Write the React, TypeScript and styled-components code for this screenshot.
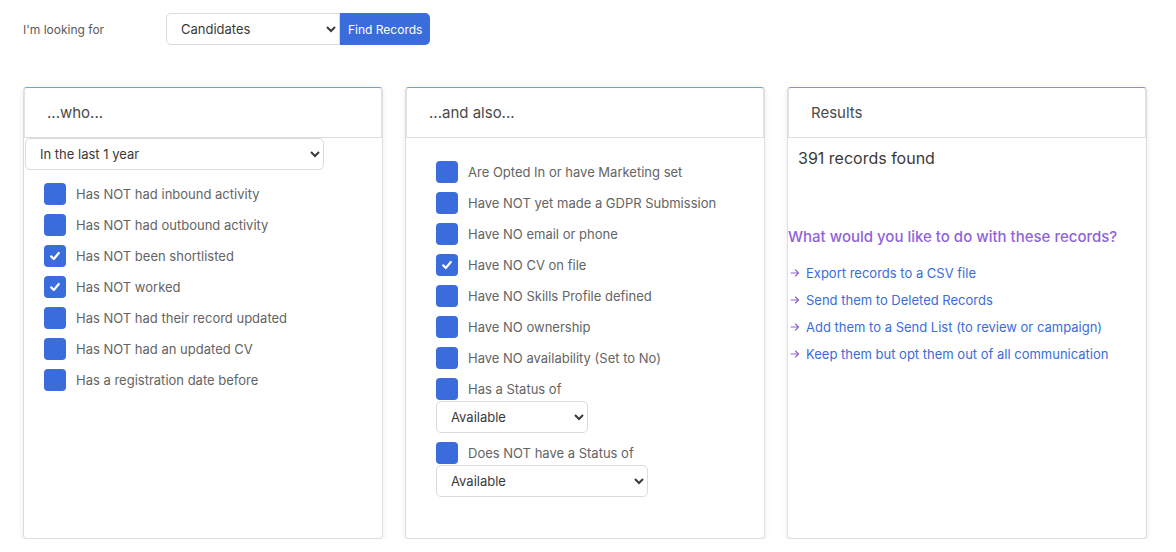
import React from "react";
import styled, { createGlobalStyle } from "styled-components";

const Global = createGlobalStyle`
  html, body { margin: 0; padding: 0; background: #fff; }
  body { font-family: Inter, "Noto Sans", "Liberation Sans", sans-serif; color: #555; }
  * { box-sizing: border-box; }
`;

const Page = styled.div`
  padding: 13px 29px 0 23px;
  width: 1176px;
`;

const Toolbar = styled.div`
  display: flex;
  align-items: center;
  height: 32px;
`;

const ToolbarLabel = styled.span`
  font-size: 12px;
  color: #5a5a5a;
  width: 143px;
`;

const Select = styled.select<{ $w: number }>`
  width: ${(p) => p.$w}px;
  height: 32px;
  font-family: Inter, "Liberation Sans", sans-serif;
  font-size: 13px;
  color: #3a3a3a;
  background: #fff;
  border: 1px solid #dcdcdc;
  border-radius: 5px;
  padding: 0 10px 0 10px;
`;

const ToolbarSelect = styled(Select)`
  border-radius: 5px 0 0 5px;
`;

const FindButton = styled.button`
  height: 32px;
  padding: 0 8px;
  border: none;
  border-radius: 0 5px 5px 0;
  background: #3a6cdc;
  color: #fff;
  font-family: Inter, "Liberation Sans", sans-serif;
  font-size: 12px;
`;

const Columns = styled.div`
  display: grid;
  grid-template-columns: repeat(3, 360px);
  gap: 22px;
  margin-top: 42px;
`;

const Card = styled.div<{ $accent: string }>`
  height: 452px;
  border: 1px solid #dedede;
  border-top: 1px solid ${(p) => p.$accent};
  border-radius: 4px;
  background: #fff;
  box-shadow: 0 2px 6px rgba(0, 0, 0, 0.08);
  display: flex;
  flex-direction: column;
`;

const CardHeader = styled.div`
  height: 50px;
  display: flex;
  align-items: center;
  padding-left: 22px;
  font-size: 15px;
  color: #4a4a4a;
  border-bottom: 1px solid #dcdcdc;
  border-left: 1px solid #e2e2e2;
  border-right: 1px solid #e2e2e2;
`;

const CardBody = styled.div<{ $pad: string }>`
  padding: ${(p) => p.$pad};
  display: flex;
  flex-direction: column;
`;

const CheckList = styled.div<{ $top: number; $left: number }>`
  display: flex;
  flex-direction: column;
  gap: 9px;
  margin-top: ${(p) => p.$top}px;
  padding-left: ${(p) => p.$left}px;
`;

const Row = styled.label`
  display: flex;
  align-items: center;
  gap: 10px;
  font-size: 13px;
  color: #646464;
  height: 22px;
`;

const Box = styled.span`
  width: 22px;
  height: 22px;
  border-radius: 4px;
  background: #3a6cdc;
  display: inline-flex;
  align-items: center;
  justify-content: center;
  flex: none;
`;

const StatusBlock = styled.div`
  display: flex;
  flex-direction: column;
  gap: 1px;
`;

const Check = ({ checked, label }: { checked?: boolean; label: string }) => (
  <Row>
    <Box>
      {checked && (
        <svg width="12" height="12" viewBox="0 0 12 12">
          <path d="M2.2 6.4 L4.8 9 L9.8 3" fill="none" stroke="#fff" strokeWidth="2.2" strokeLinecap="round" strokeLinejoin="round" />
        </svg>
      )}
    </Box>
    {label}
  </Row>
);

const Count = styled.div`
  font-size: 16px;
  color: #3a3a3a;
  padding: 10px 0 0 10px;
`;

const Question = styled.div`
  margin-top: 59px;
  font-size: 15px;
  font-weight: 500;
  color: #8e64d8;
`;

const Actions = styled.div`
  display: flex;
  flex-direction: column;
  gap: 9px;
  margin-top: 18px;
`;

const ActionLink = styled.a`
  display: flex;
  align-items: center;
  gap: 6px;
  font-size: 13px;
  color: #3a6cdc;
  text-decoration: none;
  height: 18px;
  padding-left: 2px;
`;

const Arrow = () => (
  <svg width="10" height="10" viewBox="0 0 10 10">
    <path d="M1 5 H8.5 M5.5 2 L8.5 5 L5.5 8" fill="none" stroke="#8e64d8" strokeWidth="1.1" strokeLinecap="round" strokeLinejoin="round" />
  </svg>
);

const whoItems = [
  { label: "Has NOT had inbound activity" },
  { label: "Has NOT had outbound activity" },
  { label: "Has NOT been shortlisted", checked: true },
  { label: "Has NOT worked", checked: true },
  { label: "Has NOT had their record updated" },
  { label: "Has NOT had an updated CV" },
  { label: "Has a registration date before" },
];

const alsoItems = [
  { label: "Are Opted In or have Marketing set" },
  { label: "Have NOT yet made a GDPR Submission" },
  { label: "Have NO email or phone" },
  { label: "Have NO CV on file", checked: true },
  { label: "Have NO Skills Profile defined" },
  { label: "Have NO ownership" },
  { label: "Have NO availability (Set to No)" },
];

const actions = [
  "Export records to a CSV file",
  "Send them to Deleted Records",
  "Add them to a Send List (to review or campaign)",
  "Keep them but opt them out of all communication",
];

export default function App() {
  return (
    <Page>
      <Global />
      <Toolbar>
        <ToolbarLabel>I'm looking for</ToolbarLabel>
        <ToolbarSelect $w={174} defaultValue="Candidates">
          <option>Candidates</option>
          <option>Contacts</option>
        </ToolbarSelect>
        <FindButton>Find Records</FindButton>
      </Toolbar>

      <Columns>
        <Card $accent="#6aa3d8">
          <CardHeader>...who...</CardHeader>
          <CardBody $pad="0 0 0 1px">
            <Select $w={299} defaultValue="In the last 1 year">
              <option>In the last 1 year</option>
              <option>In the last 2 years</option>
            </Select>
            <CheckList $top={13} $left={19}>
              {whoItems.map((it) => (
                <Check key={it.label} {...it} />
              ))}
            </CheckList>
          </CardBody>
        </Card>

        <Card $accent="#6aa3d8">
          <CardHeader>...and also...</CardHeader>
          <CardBody $pad="0 0 0 30px">
            <CheckList $top={23} $left={0}>
              {alsoItems.map((it) => (
                <Check key={it.label} {...it} />
              ))}
              <StatusBlock>
                <Check label="Has a Status of" />
                <Select $w={152} defaultValue="Available">
                  <option>Available</option>
                </Select>
              </StatusBlock>
              <StatusBlock>
                <Check label="Does NOT have a Status of" />
                <Select $w={212} defaultValue="Available">
                  <option>Available</option>
                </Select>
              </StatusBlock>
            </CheckList>
          </CardBody>
        </Card>

        <Card $accent="#9a86dc">
          <CardHeader>Results</CardHeader>
          <CardBody $pad="0">
            <Count>391 records found</Count>
            <Question>What would you like to do with these records?</Question>
            <Actions>
              {actions.map((a) => (
                <ActionLink key={a} href="#">
                  <Arrow />
                  {a}
                </ActionLink>
              ))}
            </Actions>
          </CardBody>
        </Card>
      </Columns>
    </Page>
  );
}
